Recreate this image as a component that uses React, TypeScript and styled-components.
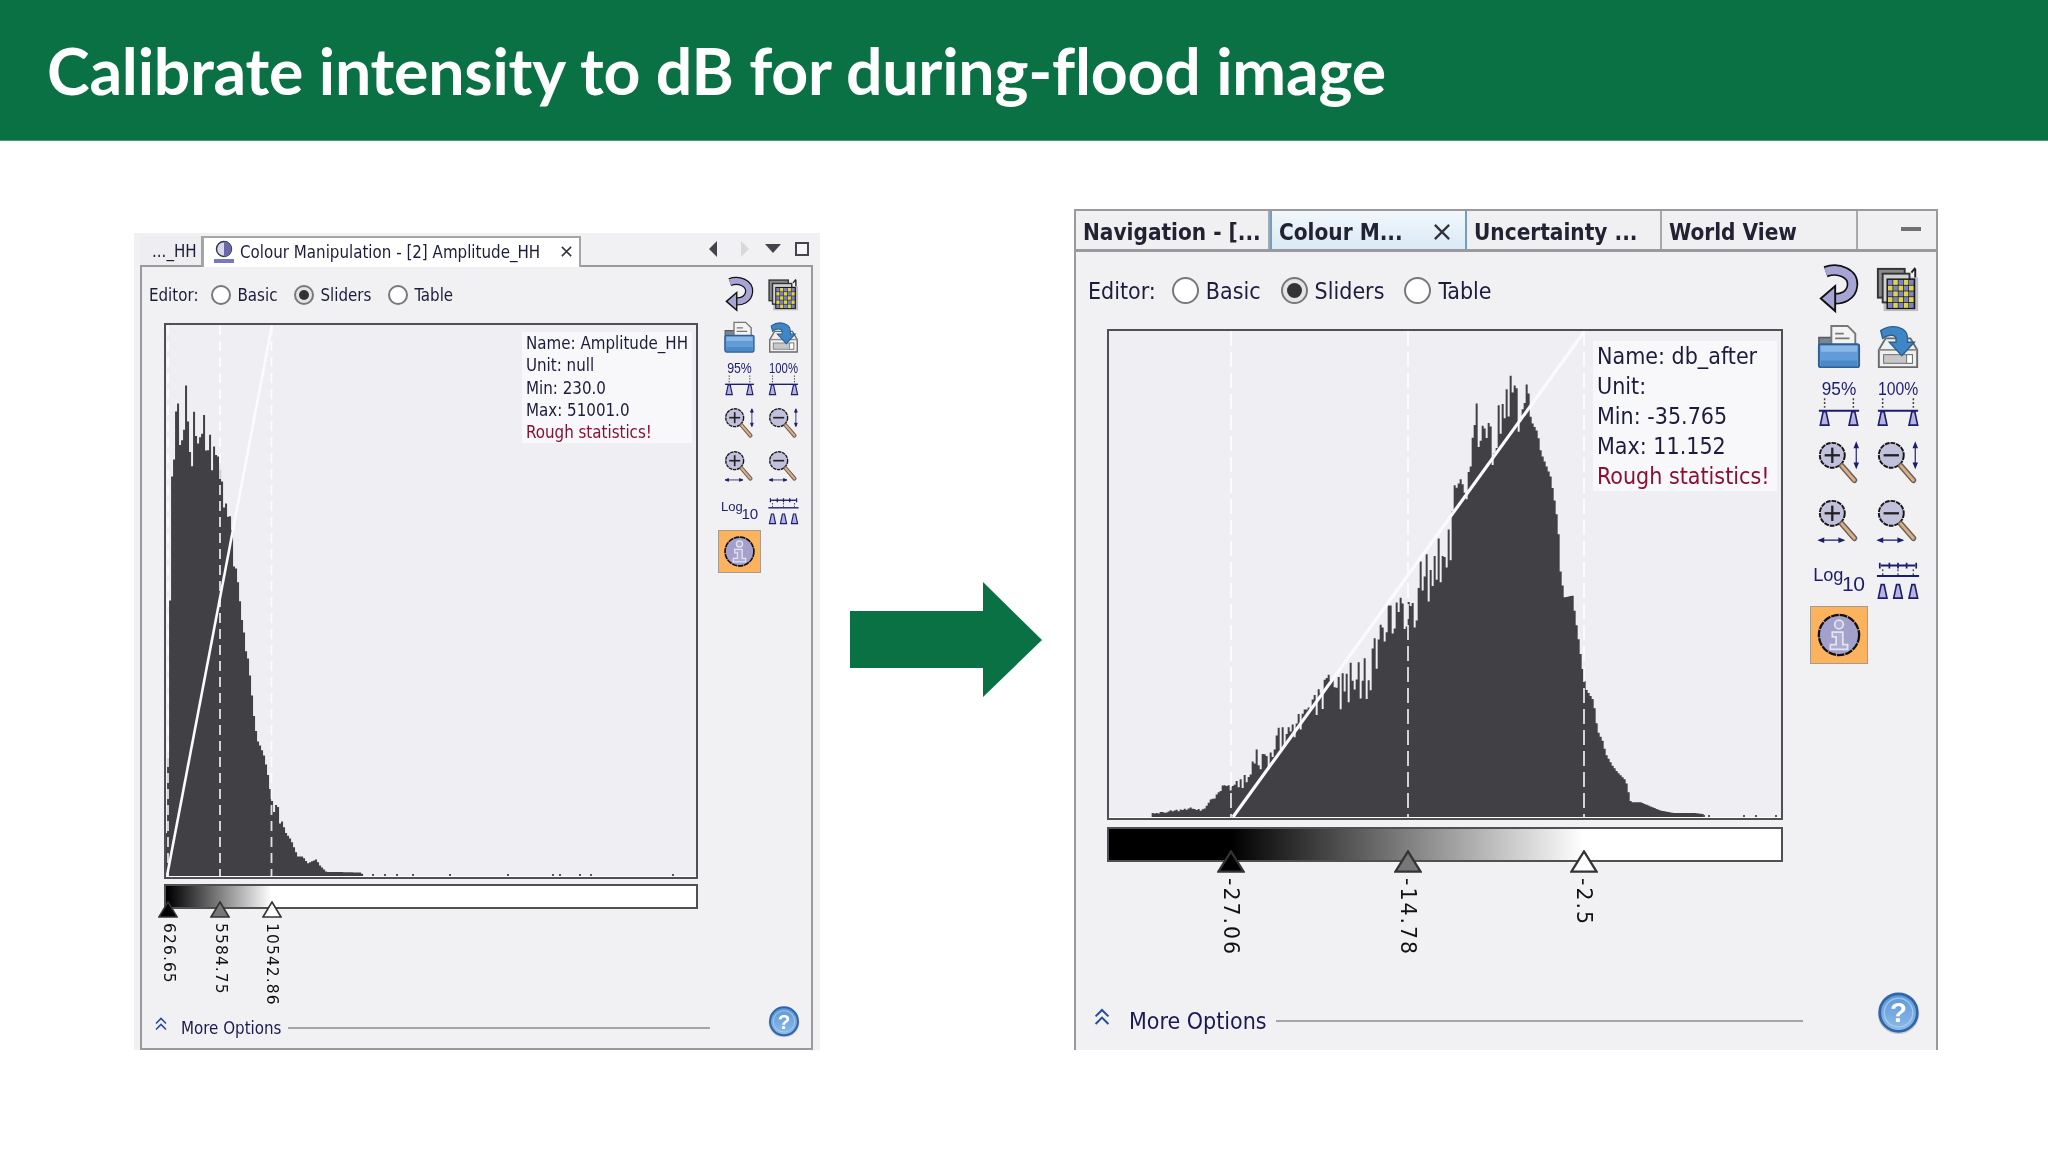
import React, { ReactNode } from "react";
import styled, { ThemeProvider, createGlobalStyle } from "styled-components";

const GREEN = "#0a7144";
const UI_FONT = `"DejaVu Sans Condensed", "Liberation Sans", sans-serif`;
const INK = "#1c1c3c";

type Metrics = typeof leftMetrics;
const leftMetrics = {
  shellWidth: 686,
  shellHeight: 817,
  shellPad: "0 7px 0 6px",
  frameTop: "2px solid #9a9a9e",
  frameBottom: "2px solid #9a9a9e",
  text: 16.8,
  infoLine: 22.3,
  infoTop: 7,
  infoWidth: 170,
  editorHeight: 56,
  editorLeft: -15,
  editorGap: 17,
  labelTuck: -4,
  optionGap: 6,
  radio: 20,
  dot: 10,
  mainPad: 22,
  chartWidth: 534,
  chartHeight: 556,
  barTop: 5,
  barHeight: 25,
  markerTop: 15,
  markerW: 20,
  markerH: 17,
  labelSize: 15.5,
  labelSpacing: 1.1,
  toolLeft: 19,
  toolTop: 6,
  toolCol: 44,
  toolRow: 42.8,
  icon: 33,
  tile: 43,
  close: 13,
  morePad: "0 11px 0 12px",
  moreHeight: 40,
  chevron: 14,
  chevronGap: 13,
  lineGap: 7,
  help: 32,
  helpLeft: 58,
  helpLift: 12,
};

const rightMetrics: Metrics = {
  shellWidth: 864,
  shellHeight: 841,
  shellPad: "0",
  frameTop: "none",
  frameBottom: "none",
  text: 23,
  infoLine: 30.1,
  infoTop: 10,
  infoWidth: 184,
  editorHeight: 77,
  editorLeft: -19,
  editorGap: 20,
  labelTuck: -4,
  optionGap: 7,
  radio: 27,
  dot: 15,
  mainPad: 31,
  chartWidth: 676,
  chartHeight: 491,
  barTop: 7,
  barHeight: 35,
  markerTop: 21,
  markerW: 28,
  markerH: 23,
  labelSize: 20.5,
  labelSpacing: 2,
  toolLeft: 26,
  toolTop: 8,
  toolCol: 59,
  toolRow: 57.7,
  icon: 46,
  tile: 58,
  close: 20,
  morePad: "0 16px 2px 17px",
  moreHeight: 56,
  chevron: 18,
  chevronGap: 18,
  lineGap: 9,
  help: 43,
  helpLeft: 74,
  helpLift: 15,
};

const m = (key: keyof Metrics) => (p: any) => p.theme[key];
const px = (key: keyof Metrics) => (p: any) => `${p.theme[key]}px`;

/* ---------- histogram data, traced from the two plots ---------- */

type Point = [number, number];

const leftTrace: Point[] = ([
  [15, 1400], [20, 1390], [22, 930], [27, 705], [33, 330], [37, 370], [42, 145], [47, 160], [52, 115], [58, 300],
  [65, 200], [70, 210], [75, 50], [80, 180], [85, 265], [92, 315], [98, 150], [105, 240], [112, 250], [118, 215],
  [128, 160], [135, 300], [143, 165], [150, 340], [158, 245], [170, 290], [180, 345], [185, 440], [195, 420],
  [205, 465], [212, 515], [218, 650], [225, 595], [232, 695], [240, 770], [248, 820], [255, 860], [265, 945],
  [275, 1050], [285, 1125], [295, 1145], [305, 1170], [315, 1215], [325, 1285], [335, 1340], [345, 1300],
  [350, 1375], [358, 1365], [370, 1400], [385, 1420], [395, 1445], [405, 1470], [420, 1470], [435, 1490],
  [445, 1485], [460, 1478], [470, 1495], [480, 1505], [490, 1515], [590, 1517], [600, 1524],
] as Point[]).map(([x, y]) => [160 + x / 2.96, 360 + y / 2.96]);

const rightTrace: Point[] = [
  ...([
    [155, 1362], [270, 1345], [310, 1350], [330, 1320], [345, 1310], [368, 1270], [385, 1280], [408, 1265],
    [430, 1250], [446, 1225], [465, 1170], [485, 1185], [510, 1180], [535, 1100], [563, 1105], [590, 1055],
    [625, 1045], [650, 985], [685, 945], [715, 955], [750, 910], [775, 910], [800, 885], [820, 840], [840, 795],
    [865, 735], [890, 710], [925, 730], [957, 610], [975, 585], [1000, 595], [1015, 530], [1045, 510], [1060, 380],
    [1078, 360],
  ] as Point[]).map(([x, y]): Point => [1100 + x / 3, 360 + y / 3]),
  ...([
    [40, 380], [60, 360], [80, 340], [105, 130], [145, 195], [175, 135], [208, 48], [228, 90], [260, 65], [270, 185],
    [290, 220], [300, 280], [330, 355], [345, 450], [352, 505], [358, 630], [370, 715], [395, 710], [405, 785],
    [415, 855], [425, 930], [435, 990], [458, 1025], [470, 1115], [485, 1145], [495, 1185], [515, 1220], [530, 1240],
    [555, 1265], [570, 1330], [600, 1330], [635, 1345], [660, 1355], [700, 1362], [760, 1362], [790, 1366],
  ] as Point[]).map(([x, y]): Point => [1440 + x / 3, 360 + y / 3]),
];

const interpolate = (trace: Point[], x: number) => {
  for (let i = 1; i < trace.length; i++) {
    if (x <= trace[i][0]) {
      const [x0, y0] = trace[i - 1];
      const [x1, y1] = trace[i];
      return y0 + ((y1 - y0) * (x - x0)) / (x1 - x0);
    }
  }
  return trace[trace.length - 1][1];
};

// step outline of the bars; the jagged part gets notches cut from a small fixed sequence
const barsPath = (trace: Point[], base: number, noisyUntil: number, depth: number) => {
  const start = trace[0][0];
  const end = trace[trace.length - 1][0];
  let seed = 7;
  let d = `M${start} ${base}`;
  for (let x = start; x < end; x += 2) {
    seed = (seed * 73 + 41) % 251;
    const exact = trace.some(([px0]) => Math.abs(px0 - x) < 1);
    const top = interpolate(trace, x);
    const notch = !exact && x < noisyUntil ? (seed / 251) ** 1.4 * Math.min(depth, (base - top) * 0.28) : 0;
    const y = Math.min(base, top + notch).toFixed(1);
    d += `V${y}H${x + 2}`;
  }
  return `${d}V${base}Z`;
};

const leftSpecks = [372, 384, 396, 412, 449, 507, 552, 559, 579, 590, 672];
const rightSpecks = [1703, 1708, 1743, 1755, 1775];

/* ---------- page ---------- */

const GlobalStyle = createGlobalStyle`
  html, body {
    margin: 0;
    padding: 0;
    background: #fff;
  }
`;

const Slide = styled.main`
  width: 2048px;
  height: 1152px;
  overflow: hidden;
  background: #fff;
`;

const Banner = styled.header`
  height: 140px;
  display: flex;
  align-items: center;
  padding: 0 0 0 47px;
  background: ${GREEN};
  border-bottom: 1px solid #4f9a7c;
`;

const Title = styled.h1`
  margin: 1px 0 0;
  color: #fff;
  font: 700 64.4px/1 Lato, "Open Sans", sans-serif;
  letter-spacing: -0.2px;
`;

const Stage = styled.section`
  height: 909px;
  display: flex;
  align-items: flex-end;
  padding-left: 134px;
`;

const ArrowBox = styled.svg`
  align-self: flex-start;
  width: 192px;
  height: 115px;
  margin: 441px 32px 0 30px;
  flex: none;
`;

/* ---------- panel ---------- */

const Shell = styled.article`
  flex: none;
  width: ${px("shellWidth")};
  height: ${px("shellHeight")};
  padding: ${m("shellPad")};
  box-sizing: border-box;
  display: flex;
  flex-direction: column;
  background: #f1f1f3;
  color: ${INK};
  font-family: ${UI_FONT};
  font-size: ${px("text")};
  filter: blur(0.5px);
`;

const Body = styled.div`
  flex: 1;
  min-height: 0;
  display: flex;
  flex-direction: column;
  border: 2px solid #9a9a9e;
  border-top: ${m("frameTop")};
  border-bottom: ${m("frameBottom")};
  box-sizing: border-box;
`;

const Upper = styled.div`
  flex: 1;
  display: flex;
  min-height: 0;
`;

const Main = styled.div`
  padding-left: ${px("mainPad")};
`;

const EditorRow = styled.div`
  height: ${px("editorHeight")};
  margin-left: ${px("editorLeft")};
  display: flex;
  align-items: center;
  gap: ${px("editorGap")};
`;

const EditorLabel = styled.span`
  margin-right: ${px("labelTuck")};
`;

const Option = styled.span`
  display: flex;
  align-items: center;
  gap: ${px("optionGap")};
`;

const Radio = styled.span<{ $on?: boolean }>`
  width: ${px("radio")};
  height: ${px("radio")};
  box-sizing: border-box;
  display: flex;
  align-items: center;
  justify-content: center;
  border-radius: 50%;
  border: 2px solid #77777c;
  background: ${(p) => (p.$on ? "#e4e4e8" : "#fff")};

  &::after {
    content: "";
    display: ${(p) => (p.$on ? "block" : "none")};
    width: ${px("dot")};
    height: ${px("dot")};
    border-radius: 50%;
    background: #333;
  }
`;

const Chart = styled.div`
  position: relative;
  width: ${px("chartWidth")};
  height: ${px("chartHeight")};
  box-sizing: border-box;
  border: 2px solid #505054;
  background: #efeef2;
`;

const ChartSvg = styled.svg`
  display: block;
  width: 100%;
  height: 100%;
`;

const InfoBox = styled.div`
  position: absolute;
  top: ${px("infoTop")};
  right: 4px;
  width: ${px("infoWidth")};
  padding: 0 4px;
  box-sizing: border-box;
  background: #f8f8fa;
  line-height: ${px("infoLine")};
  white-space: nowrap;
`;

const Warning = styled.div`
  color: #8a1030;
`;

const GradientBar = styled.div<{ $stops: string }>`
  position: relative;
  width: ${px("chartWidth")};
  height: ${px("barHeight")};
  margin-top: ${px("barTop")};
  box-sizing: border-box;
  border: 2px solid #505054;
  background: linear-gradient(90deg, ${(p) => p.$stops});
`;

const Marker = styled.div<{ $at: number }>`
  position: absolute;
  top: ${px("markerTop")};
  left: ${(p) => p.$at}px;
  transform: translateX(-50%);
  display: flex;
  flex-direction: column;
  align-items: center;
`;

const MarkerLabel = styled.span`
  margin-top: 5px;
  writing-mode: vertical-rl;
  color: #111;
  font-family: "DejaVu Sans", sans-serif;
  font-size: ${px("labelSize")};
  letter-spacing: ${px("labelSpacing")};
  line-height: 1;
  white-space: nowrap;
`;

const MarkerTriangle = styled.svg`
  display: block;
  width: ${px("markerW")};
  height: ${px("markerH")};
`;

const Toolbar = styled.div`
  margin: ${px("toolTop")} 0 0 ${px("toolLeft")};
  display: grid;
  grid-template-columns: repeat(2, ${px("toolCol")});
  grid-auto-rows: ${px("toolRow")};
  justify-items: center;
  align-items: center;
`;

const IconSvg = styled.svg`
  display: block;
  overflow: visible;
  width: ${px("icon")};
  height: ${px("icon")};
`;

const InfoTile = styled.div`
  width: ${px("tile")};
  height: ${px("tile")};
  box-sizing: border-box;
  display: flex;
  align-items: center;
  justify-content: center;
  background: #fdb35e;
  border: 1px solid #a49c8c;
`;

const MoreRow = styled.div`
  height: ${px("moreHeight")};
  flex: none;
  display: flex;
  align-items: center;
  padding: ${m("morePad")};
  box-sizing: border-box;
`;

const Chevron = styled.svg`
  width: ${px("chevron")};
  height: ${px("chevron")};
  margin-right: ${px("chevronGap")};
  margin-bottom: 8px;
  flex: none;
`;

const MoreLabel = styled.span`
  color: #1a1a50;
  white-space: nowrap;
`;

const MoreRule = styled.span`
  flex: 1;
  height: 2px;
  margin-left: ${px("lineGap")};
  background: #a6a6aa;
`;

const HelpIcon = styled.svg`
  flex: none;
  width: ${px("help")};
  height: ${px("help")};
  margin-left: ${px("helpLeft")};
  margin-bottom: ${px("helpLift")};
`;

const CloseIcon = styled.svg`
  flex: none;
  width: ${px("close")};
  height: ${px("close")};
`;

/* ---------- left tab strip ---------- */

const LeftStrip = styled.div`
  flex: none;
  height: 34px;
  padding-top: 3px;
  box-sizing: border-box;
  display: flex;
  align-items: stretch;
  margin-bottom: -2px;
  position: relative;
`;

const OldTab = styled.div`
  width: 62px;
  box-sizing: border-box;
  padding: 5px 0 0 12px;
  overflow: hidden;
  white-space: nowrap;
  background: #eeeef0;
  border-right: 1px solid #a0a0a4;
  border-bottom: 2px solid #9a9a9e;
`;

const ActiveTab = styled.div`
  width: 379px;
  box-sizing: border-box;
  display: flex;
  align-items: center;
  padding: 0 6px 2px 9px;
  background: #fff;
  border: 2px solid #a6a6aa;
  border-bottom: none;
  white-space: nowrap;
`;

const TabText = styled.span`
  flex: 1;
  margin-left: 5px;
`;

const StripTools = styled.div`
  flex: 1;
  display: flex;
  align-items: center;
  justify-content: flex-end;
  padding: 0 4px 4px 0;
  border-bottom: 2px solid #9a9a9e;
`;

/* ---------- right tab strip ---------- */

const RightStrip = styled.div`
  flex: none;
  height: 43px;
  display: flex;
  box-sizing: border-box;
  border: 2px solid #9a9a9e;
  border-bottom-width: 3px;
  font-weight: 700;
  font-size: 22.4px;
  color: #222233;
`;

const ViewTab = styled.div<{ $active?: boolean; $width: number }>`
  width: ${(p) => p.$width}px;
  box-sizing: border-box;
  display: flex;
  align-items: center;
  justify-content: space-between;
  padding: 4px 13px 0 7px;
  white-space: nowrap;
  background: ${(p) => (p.$active ? "linear-gradient(#f2f7fc, #d9e9f6)" : "#f0f0f2")};
  border-left: ${(p) => (p.$active ? "2px solid #6f9fc6" : "none")};
  border-right: ${(p) => (p.$active ? "2px solid #6f9fc6" : "2px solid #a8a8ac")};
`;

const MinimizeCell = styled.div`
  flex: 1;
  display: flex;
  justify-content: flex-end;
  align-items: center;
  padding: 0 15px 2px 0;
  background: #f0f0f2;
`;

const MinimizeBar = styled.span`
  width: 20px;
  height: 4px;
  background: #707074;
`;

/* ---------- icons ---------- */

const ICON_BLUE = "#1d1d70";

const Svg = ({ children }: { children: ReactNode }) => <IconSvg viewBox="0 0 48 48">{children}</IconSvg>;

const UndoIcon = () => (
  <Svg>
    <path d="M10 6C24 1 39 8 38 20C37 31 27 35 17 34" fill="none" stroke="#111" strokeWidth="12" />
    <path d="M10 6C24 1 39 8 38 20C37 31 27 35 17 34" fill="none" stroke="#a7a5d6" strokeWidth="8.5" />
    <path d="M5 34L20 21L20 47Z" fill="#a7a5d6" stroke="#111" strokeWidth="2" />
  </Svg>
);

const LayersIcon = () => (
  <Svg>
    <rect x="9" y="12" width="36" height="35" fill="#bdbdc0" />
    <rect x="3" y="3" width="28" height="30" fill="#8a8a8e" stroke="#333" strokeWidth="2" />
    <rect x="8" y="8" width="28" height="30" fill="#d0d0d4" stroke="#333" strokeWidth="2" />
    <rect x="12" y="13" width="30" height="32" fill="#17171a" />
    {Array.from({ length: 25 }, (_, i) => (
      <rect
        key={i}
        x={13.5 + (i % 5) * 5.5}
        y={14.5 + Math.floor(i / 5) * 6}
        width="4.8"
        height="5.2"
        fill={i % 2 ? "#d9d64a" : "#8480c8"}
      />
    ))}
    <path d="M42 12V3M38 7L42 2" fill="none" stroke="#222" strokeWidth="2" />
  </Svg>
);

const FolderIcon = () => (
  <Svg>
    <path d="M3 14H17V42H3Z" fill="#7b8590" stroke="#556" strokeWidth="1.5" />
    <path d="M16 2H33L41 10V26H16Z" fill="#f3f3f3" stroke="#777" strokeWidth="2" />
    <path d="M20 10H29M20 15H35" stroke="#777" strokeWidth="2" />
    <rect x="3" y="21" width="42" height="24" rx="2" fill="#629cd6" stroke="#2d5f96" strokeWidth="2" />
    <path d="M5 23H43V29H5Z" fill="#8ab8e6" />
    <path d="M5 38H43V44H5Z" fill="#4a88c8" />
  </Svg>
);

const ImportIcon = () => (
  <Svg>
    <path d="M4 27L11 15H37L44 27V45H4Z" fill="#efefef" stroke="#6a6a6a" strokeWidth="2" />
    <path d="M4 27H44" stroke="#8a8a8a" strokeWidth="2" />
    <rect x="9" y="32" width="30" height="9" fill="#c7c7ca" stroke="#6a6a6a" strokeWidth="1" />
    <rect x="33" y="32" width="6" height="9" fill="#fff" stroke="#6a6a6a" strokeWidth="1" />
    <path
      d="M6 7C18 -1 34 3 34 15V19H41L28 33L15 19H22V16C22 11 15 10 8 15Z"
      fill="#3f86c6"
      stroke="#2a5f8f"
      strokeWidth="1.5"
    />
  </Svg>
);

const Weight = ({ x }: { x: number }) => (
  <polygon
    points={`${x - 4.5},46 ${x - 1.5},32 ${x + 1.5},32 ${x + 4.5},46`}
    fill="#b6b4e0"
    stroke={ICON_BLUE}
    strokeWidth="1.7"
  />
);

const RangeIcon = ({ label, a, b, fit }: { label: string; a: number; b: number; fit: number }) => (
  <Svg>
    <text
      x={24 - fit / 2}
      y="15"
      fontSize="20"
      textLength={fit}
      lengthAdjust="spacingAndGlyphs"
      fontFamily="Liberation Sans, sans-serif"
      fill={ICON_BLUE}
    >
      {label}
    </text>
    <path d={`M${a} 18V30M${b} 18V30`} stroke="#444" strokeWidth="1.6" strokeDasharray="2 2" />
    <path d="M3 31H45" stroke={ICON_BLUE} strokeWidth="2" />
    <Weight x={a} />
    <Weight x={b} />
  </Svg>
);

const LensIcon = ({ plus, axis }: { plus?: boolean; axis: "v" | "h" }) => (
  <Svg>
    <circle cx="17" cy="17" r="13" fill="#c2c1dc" stroke="#151515" strokeWidth="2" strokeDasharray="5 1" />
    <path d="M9 17H25" stroke="#222" strokeWidth="2.4" />
    {plus && <path d="M17 9V25" stroke="#222" strokeWidth="2.4" />}
    <path d="M27 28L40 43" stroke="#6a5f55" strokeWidth="6" strokeLinecap="round" />
    <path d="M27 28L40 43" stroke="#dcae86" strokeWidth="3" strokeLinecap="round" />
    {axis === "v" ? (
      <path
        d="M42 5V29M40 9L42 4L44 9ZM40 25L42 30L44 25Z"
        fill={ICON_BLUE}
        stroke={ICON_BLUE}
        strokeWidth="1.2"
      />
    ) : (
      <path
        d="M4 45H28M8 43L3 45L8 47ZM24 43L29 45L24 47Z"
        fill={ICON_BLUE}
        stroke={ICON_BLUE}
        strokeWidth="1.2"
      />
    )}
  </Svg>
);

const LogIcon = () => (
  <Svg>
    <text x="-3" y="28" fontSize="19" fontFamily="Liberation Sans, sans-serif" fill={ICON_BLUE}>
      Log
    </text>
    <text x="27" y="39" fontSize="22" letterSpacing="-0.4" fontFamily="Liberation Sans, sans-serif" fill={ICON_BLUE}>
      10
    </text>
  </Svg>
);

const SpreadIcon = () => (
  <Svg>
    <path d="M6 12H42" stroke={ICON_BLUE} strokeWidth="2" />
    <path d="M15 9V15M24 9V15M33 9V15M5 9V15M43 9V15" stroke={ICON_BLUE} strokeWidth="1.8" />
    <path d="M2 23H46" stroke={ICON_BLUE} strokeWidth="2" />
    <path d="M8 16V24M24 16V24M40 16V24" stroke="#555" strokeWidth="1.5" strokeDasharray="2 2" />
    <Weight x={8} />
    <Weight x={24} />
    <Weight x={40} />
  </Svg>
);

const InfoIcon = () => (
  <Svg>
    <circle cx="24" cy="24" r="21" fill="#a3a1cc" stroke="#111" strokeWidth="2.4" strokeDasharray="8 1" />
    <circle cx="24" cy="13" r="4.5" fill="#aeacd3" stroke="#e4e4f0" strokeWidth="1.8" />
    <path d="M17 21H28V34H33V39H15V34H21V26H17Z" fill="#aeacd3" stroke="#e4e4f0" strokeWidth="1.8" />
  </Svg>
);

const QuestionIcon = () => (
  <HelpIcon viewBox="0 0 48 48">
    <defs>
      <linearGradient id="helpFill" x1="0" y1="0" x2="0" y2="1">
        <stop offset="0" stopColor="#5d97d8" />
        <stop offset="1" stopColor="#8dbbe8" />
      </linearGradient>
    </defs>
    <ellipse cx="24" cy="25" rx="23" ry="22" fill="#c9c9cd" />
    <circle cx="24" cy="23" r="21" fill="url(#helpFill)" stroke="#2f66a8" strokeWidth="3" />
    <circle cx="24" cy="23" r="16" fill="none" stroke="#b6d3f0" strokeWidth="1.5" opacity="0.7" />
    <text
      x="24"
      y="34"
      textAnchor="middle"
      fontSize="31"
      fontWeight="700"
      fontFamily="Liberation Sans, sans-serif"
      fill="#fff"
    >
      ?
    </text>
  </HelpIcon>
);

const DoubleChevron = () => (
  <Chevron viewBox="0 0 14 14">
    <path d="M2 6.5L7 1.5L12 6.5M2 12.5L7 7.5L12 12.5" fill="none" stroke="#2a4c9c" strokeWidth="1.6" />
  </Chevron>
);

const ColourTabIcon = () => (
  <svg width="22" height="24" viewBox="0 0 22 24">
    <circle cx="11" cy="9" r="7.5" fill="#d8d8e8" stroke="#33334a" strokeWidth="1.4" />
    <path d="M11 1.5A7.5 7.5 0 0 1 11 16.5Z" fill="#6a68a8" />
    <rect x="1" y="19" width="20" height="4" fill="#7a78c4" />
  </svg>
);

const StripIcons = () => (
  <svg width="108" height="18" viewBox="0 0 108 18">
    <path d="M16 1V17L8 9Z" fill="#44444c" />
    <path d="M40 1V17L48 9Z" fill="#d8d8dc" />
    <path d="M64 4H80L72 13Z" fill="#44444c" />
    <rect x="95" y="3" width="12" height="12" fill="#f6f6f8" stroke="#44444c" strokeWidth="2" />
  </svg>
);

const CloseGlyph = () => (
  <CloseIcon viewBox="0 0 14 14">
    <path d="M2 2L12 12M12 2L2 12" stroke="#33333c" strokeWidth="1.6" />
  </CloseIcon>
);

/* ---------- panel assembly ---------- */

type MarkerData = { x: number; value: string; fill: string };

type PanelProps = {
  metrics: Metrics;
  strip: ReactNode;
  origin: [number, number];
  trace: Point[];
  base: number;
  noisyUntil: number;
  depth: number;
  line: [number, number, number, number];
  lineWidth: number;
  dash: string;
  specks: number[];
  markers: MarkerData[];
  info: string[];
};

function ColourPanel(props: PanelProps) {
  const { metrics, strip, origin, trace, base, noisyUntil, depth, line, lineWidth, dash, specks, markers, info } = props;
  const [ox, oy] = origin;
  const innerW = metrics.chartWidth - 4;
  const innerH = metrics.chartHeight - 4;
  const stops = `#000 ${markers[0].x - ox}px, #808080 ${markers[1].x - ox}px, #fff ${markers[2].x - ox}px`;

  return (
    <ThemeProvider theme={metrics}>
      <Shell>
        {strip}
        <Body>
          <Upper>
            <Main>
              <EditorRow>
                <EditorLabel>Editor:</EditorLabel>
                <Option>
                  <Radio />
                  Basic
                </Option>
                <Option>
                  <Radio $on />
                  Sliders
                </Option>
                <Option>
                  <Radio />
                  Table
                </Option>
              </EditorRow>
              <Chart>
                <ChartSvg viewBox={`${ox} ${oy} ${innerW} ${innerH}`} preserveAspectRatio="none">
                  <rect x={ox} y={base} width={innerW} height="2" fill="#fff" />
                  <path d={barsPath(trace, base, noisyUntil, depth)} fill="#414044" />
                  {specks.map((x) => (
                    <rect key={x} x={x} y={base - 2} width="2" height="2" fill="#55555a" />
                  ))}
                  {markers.map((mk) => (
                    <path
                      key={mk.value}
                      d={`M${mk.x} ${oy}V${base}`}
                      stroke="#fff"
                      strokeWidth="1.8"
                      strokeDasharray={dash}
                      opacity="0.85"
                    />
                  ))}
                  <path d={`M${line[0]} ${line[1]}L${line[2]} ${line[3]}`} stroke="#fbfbfc" strokeWidth={lineWidth} />
                </ChartSvg>
                <InfoBox>
                  {info.map((row) => (
                    <div key={row}>{row}</div>
                  ))}
                  <Warning>Rough statistics!</Warning>
                </InfoBox>
              </Chart>
              <GradientBar $stops={stops}>
                {markers.map((mk) => (
                  <Marker key={mk.value} $at={mk.x - ox}>
                    <MarkerTriangle viewBox="0 0 20 17" preserveAspectRatio="none">
                      <path d="M10 1L19 16H1Z" fill={mk.fill} stroke="#333" strokeWidth="1.6" />
                    </MarkerTriangle>
                    <MarkerLabel>{mk.value}</MarkerLabel>
                  </Marker>
                ))}
              </GradientBar>
            </Main>
            <Toolbar>
              <UndoIcon />
              <LayersIcon />
              <FolderIcon />
              <ImportIcon />
              <RangeIcon label="95%" a={9} b={39} fit={36} />
              <RangeIcon label="100%" a={8} b={40} fit={42} />
              <LensIcon plus axis="v" />
              <LensIcon axis="v" />
              <LensIcon plus axis="h" />
              <LensIcon axis="h" />
              <LogIcon />
              <SpreadIcon />
              <InfoTile>
                <InfoIcon />
              </InfoTile>
            </Toolbar>
          </Upper>
          <MoreRow>
            <DoubleChevron />
            <MoreLabel>More Options</MoreLabel>
            <MoreRule />
            <QuestionIcon />
          </MoreRow>
        </Body>
      </Shell>
    </ThemeProvider>
  );
}

export default function App() {
  return (
    <Slide>
      <GlobalStyle />
      <Banner>
        <Title>Calibrate intensity to dB for during-flood image</Title>
      </Banner>
      <Stage>
        <ColourPanel
          metrics={leftMetrics}
          strip={
            <LeftStrip>
              <OldTab>..._HH</OldTab>
              <ActiveTab>
                <ColourTabIcon />
                <TabText>Colour Manipulation - [2] Amplitude_HH</TabText>
                <CloseGlyph />
              </ActiveTab>
              <StripTools>
                <StripIcons />
              </StripTools>
            </LeftStrip>
          }
          origin={[166, 325]}
          trace={leftTrace}
          base={876}
          noisyUntil={250}
          depth={26}
          line={[167, 876, 272, 325]}
          lineWidth={2.6}
          dash="10 6"
          specks={leftSpecks}
          markers={[
            { x: 168, value: "626.65", fill: "#000" },
            { x: 220, value: "5584.75", fill: "#777" },
            { x: 271.5, value: "10542.86", fill: "#fff" },
          ]}
          info={["Name: Amplitude_HH", "Unit: null", "Min: 230.0", "Max: 51001.0"]}
        />
        <ArrowBox viewBox="0 0 192 115">
          <path d="M0 29H133V0L192 58L133 115V86H0Z" fill={GREEN} />
        </ArrowBox>
        <ColourPanel
          metrics={rightMetrics}
          strip={
            <RightStrip>
              <ViewTab $width={194}>Navigation - [...</ViewTab>
              <ViewTab $width={197} $active>
                Colour M...
                <CloseGlyph />
              </ViewTab>
              <ViewTab $width={195}>Uncertainty ...</ViewTab>
              <ViewTab $width={196}>World View</ViewTab>
              <MinimizeCell>
                <MinimizeBar />
              </MinimizeCell>
            </RightStrip>
          }
          origin={[1109, 332]}
          trace={rightTrace}
          base={818}
          noisyUntil={1530}
          depth={48}
          line={[1233, 818, 1584, 333]}
          lineWidth={3.2}
          dash="15 6"
          specks={rightSpecks}
          markers={[
            { x: 1231, value: "-27.06", fill: "#000" },
            { x: 1408, value: "-14.78", fill: "#777" },
            { x: 1584, value: "-2.5", fill: "#fff" },
          ]}
          info={["Name: db_after", "Unit:", "Min: -35.765", "Max: 11.152"]}
        />
      </Stage>
    </Slide>
  );
}
